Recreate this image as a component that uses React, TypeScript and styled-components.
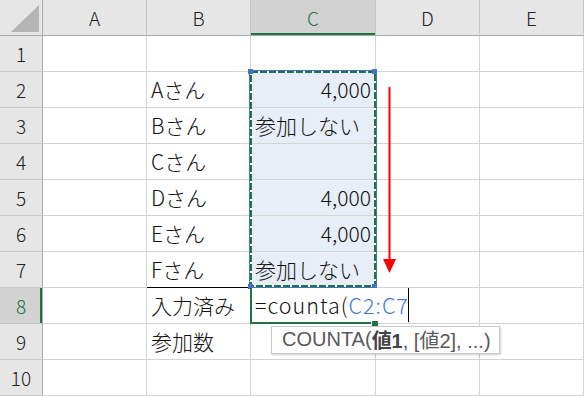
import React from "react";
import styled, { createGlobalStyle } from "styled-components";

const Global = createGlobalStyle`
  html, body { margin: 0; padding: 0; background: #fff; }
  body { font-family: "Noto Sans CJK JP", "Noto Sans", sans-serif; }
`;

const GREEN = "#217346";
const BLUE = "#4472c4";

const Sheet = styled.div`
  position: relative;
  width: 584px;
  height: 396px;
  overflow: hidden;
  display: grid;
  grid-template-columns: 43px 104px 104px 125px 104px 104px;
  grid-template-rows: repeat(11, 36px);
  font-family: "Noto Sans CJK JP", sans-serif;
`;

const Corner = styled.div`
  position: relative;
  background: #e6e6e6;
  border-right: 1px solid #ababab;
  border-bottom: 1px solid #ababab;
  box-sizing: border-box;
  &::after {
    content: "";
    position: absolute;
    left: 11px;
    top: 5px;
    width: 28px;
    height: 27px;
    background: #b4b4b4;
    clip-path: polygon(100% 0, 100% 100%, 0 100%);
  }
`;

const ColHeader = styled.div<{ $active?: boolean }>`
  box-sizing: border-box;
  display: flex;
  align-items: center;
  justify-content: center;
  background: ${(p) => (p.$active ? "#d2d2d2" : "#e6e6e6")};
  color: ${(p) => (p.$active ? GREEN : "#222")};
  border-right: 1px solid #c6c6c6;
  border-bottom: 1px solid #ababab;
  box-shadow: ${(p) => (p.$active ? `inset 0 -2px 0 ${GREEN}` : "none")};
  font-size: 19px;
  font-weight: 300;
  padding-bottom: 1px;
`;

const RowHeader = styled.div<{ $active?: boolean }>`
  box-sizing: border-box;
  display: flex;
  align-items: center;
  justify-content: center;
  background: ${(p) => (p.$active ? "#d2d2d2" : "#e6e6e6")};
  color: ${(p) => (p.$active ? GREEN : "#222")};
  border-right: 1px solid #ababab;
  border-bottom: 1px solid #c6c6c6;
  box-shadow: ${(p) => (p.$active ? `inset -2px 0 0 ${GREEN}` : "none")};
  font-size: 19px;
  font-weight: 300;
`;

const Cell = styled.div<{ $right?: boolean; $tint?: boolean; $ruled?: boolean }>`
  box-sizing: border-box;
  display: flex;
  align-items: center;
  justify-content: ${(p) => (p.$right ? "flex-end" : "flex-start")};
  padding: 0 4px 1px 4px;
  background: ${(p) => (p.$tint ? "#e8eef8" : "#fff")};
  border-right: 1px solid #d4d4d4;
  border-bottom: 1px solid ${(p) => (p.$ruled ? "#000" : "#d4d4d4")};
  font-size: 21px;
  font-weight: 300;
  color: #111;
  white-space: nowrap;
`;

const RangeBox = styled.div`
  position: absolute;
  left: 249px;
  top: 70px;
  width: 128px;
  height: 218px;
  box-sizing: border-box;
  border: 1px solid ${BLUE};
  pointer-events: none;
`;

const Ants = styled.svg`
  position: absolute;
  left: 0;
  top: 0;
  display: block;
`;

const Handle = styled.div<{ $color?: string; $size?: number }>`
  position: absolute;
  width: ${(p) => p.$size ?? 5}px;
  height: ${(p) => p.$size ?? 5}px;
  background: ${(p) => p.$color ?? BLUE};
`;

const ActiveFrame = styled.div`
  position: absolute;
  left: 250px;
  top: 288px;
  width: 121px;
  height: 36px;
  box-sizing: border-box;
  border-left: 2px solid ${GREEN};
  border-bottom: 2px solid ${GREEN};
`;

const EditBox = styled.div`
  position: absolute;
  left: 252px;
  top: 288px;
  width: 157px;
  height: 34px;
  box-sizing: border-box;
  background: #fff;
  border-right: 1px solid #000;
  display: flex;
  align-items: center;
  padding: 0 0 1px 3px;
  font-size: 21.5px;
  font-weight: 300;
  letter-spacing: 1px;
  color: #111;
  white-space: nowrap;
`;

const Ref = styled.span`
  color: #3c78d8;
`;

const Tip = styled.div`
  position: absolute;
  left: 271px;
  top: 326px;
  width: 229px;
  height: 28px;
  box-sizing: border-box;
  background: #fff;
  border: 1px solid #c8c8c8;
  box-shadow: 1px 1px 2px rgba(0, 0, 0, 0.18);
  display: flex;
  align-items: center;
  padding: 0 0 1px 10px;
  font-family: "Liberation Sans", "Noto Sans CJK JP", sans-serif;
  font-size: 20px;
  color: #595959;
  white-space: nowrap;
`;

const Bold = styled.b`
  font-weight: 700;
  color: #444;
`;

const Arrow = styled.svg`
  position: absolute;
  left: 383px;
  top: 87px;
  display: block;
`;

type Row = { b?: string; c?: string; cRight?: boolean };

const rows: Row[] = [
  {},
  { b: "Aさん", c: "4,000", cRight: true },
  { b: "Bさん", c: "参加しない" },
  { b: "Cさん" },
  { b: "Dさん", c: "4,000", cRight: true },
  { b: "Eさん", c: "4,000", cRight: true },
  { b: "Fさん", c: "参加しない" },
  { b: "入力済み" },
  { b: "参加数" },
  {},
];

const cols = ["A", "B", "C", "D", "E"];

export default function App() {
  return (
    <>
      <Global />
      <Sheet>
        <Corner />
        {cols.map((c) => (
          <ColHeader key={c} $active={c === "C"}>
            {c}
          </ColHeader>
        ))}
        {rows.map((r, i) => {
          const n = i + 1;
          const inRange = n >= 2 && n <= 7;
          return (
            <React.Fragment key={n}>
              <RowHeader $active={n === 8}>{n}</RowHeader>
              <Cell />
              <Cell $ruled={n === 7}>{r.b}</Cell>
              <Cell $right={r.cRight} $tint={inRange}>
                {r.c}
              </Cell>
              <Cell />
              <Cell />
            </React.Fragment>
          );
        })}

        <RangeBox>
          <Ants width="126" height="216" viewBox="0 0 126 216">
            <rect x="1" y="1" width="124" height="214" fill="none" stroke="#fff" strokeWidth="2" />
            <rect
              x="1"
              y="1"
              width="124"
              height="214"
              fill="none"
              stroke={GREEN}
              strokeWidth="2"
              strokeDasharray="7 2"
            />
          </Ants>
        </RangeBox>
        <Handle style={{ left: 248, top: 69 }} />
        <Handle style={{ left: 372, top: 69 }} />
        <Handle style={{ left: 248, top: 284 }} />
        <Handle style={{ left: 372, top: 284 }} />

        <EditBox>
          =counta(<Ref>C2:C7</Ref>
        </EditBox>
        <ActiveFrame />
        <Handle $color={GREEN} $size={6} style={{ left: 372, top: 321 }} />

        <Tip>
          COUNTA(<Bold>値1</Bold>, [値2], ...)
        </Tip>

        <Arrow width="13" height="187" viewBox="0 0 13 187">
          <line x1="6.5" y1="0" x2="6.5" y2="176" stroke="#ff0000" strokeWidth="2" />
          <polygon points="0,172 13,172 6.5,186" fill="#ff0000" />
        </Arrow>
      </Sheet>
    </>
  );
}
